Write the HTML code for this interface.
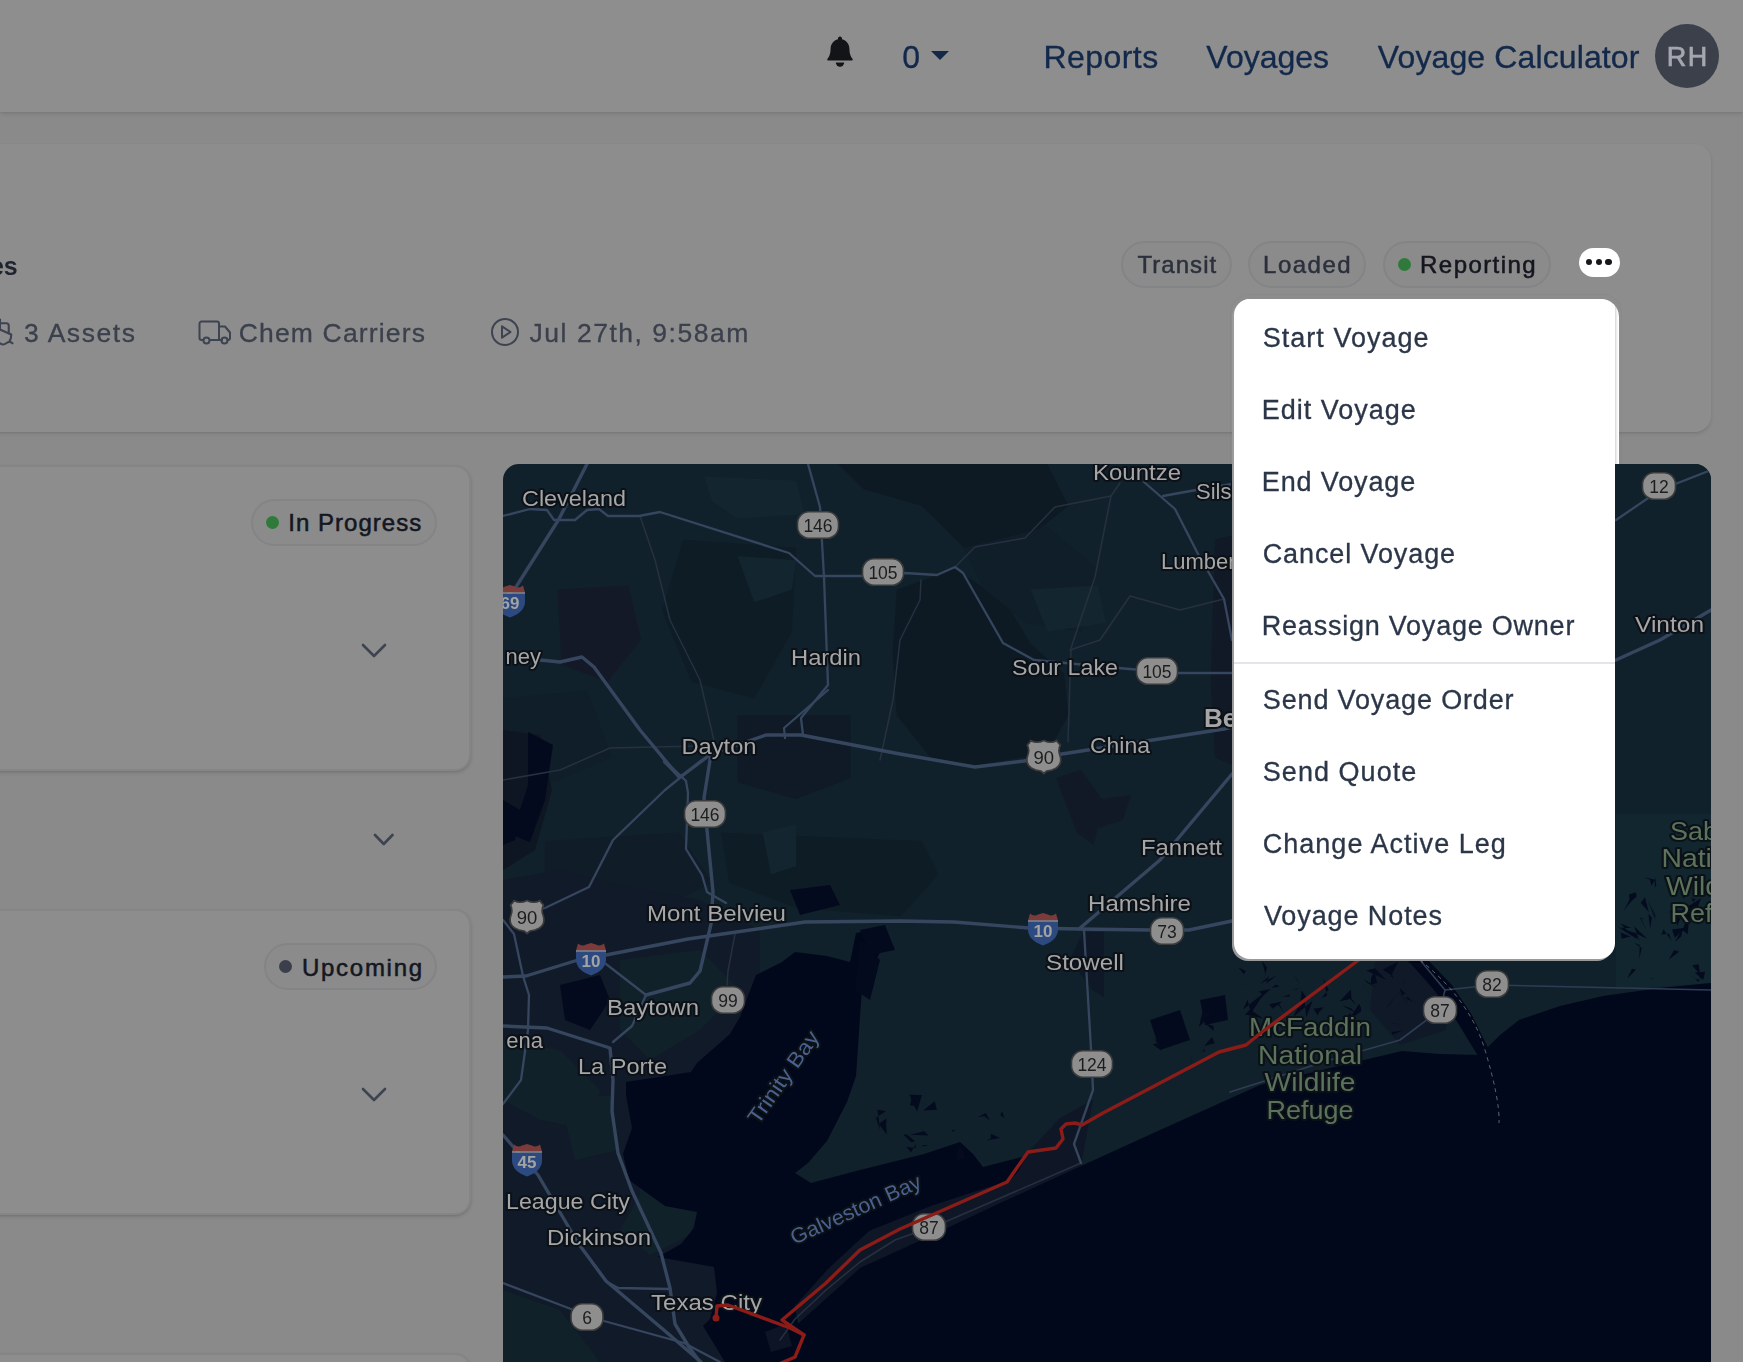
<!DOCTYPE html><html><head><meta charset="utf-8"><style>
*{box-sizing:border-box;margin:0;padding:0}
html,body{width:1743px;height:1362px;overflow:hidden;background:#8a8a8a;font-family:"Liberation Sans",sans-serif;}
.t{position:absolute;white-space:nowrap;}
#w{position:absolute;left:0;top:0;width:1743px;height:1362px;overflow:hidden;will-change:opacity;opacity:.9999}
.abs{position:absolute;}
.card{position:absolute;background:#8d8d8d;border-radius:16px;}
.pill{position:absolute;border-radius:24px;background:#8b8b8c;border:2px solid #838485;}
</style></head><body><div id="w"><div class="abs" style="left:0;top:0;width:1743px;height:112px;background:#8e8e8e;box-shadow:0 2px 5px rgba(0,0,0,.10),0 1px 2px rgba(0,0,0,.06)"></div><svg class="abs" style="left:826px;top:35px" width="28" height="34" viewBox="0 0 28 34"><path d="M14 1.6c-1.1 0-2 .9-2 2v.7C7.6 5.3 4.6 9.200 4.600 13.800c0 5.200-1.500 8.300-3.200 10.300-.5.600-.1 1.500.7 1.500h23.800c.8 0 1.200-.9.7-1.500-1.700-2-3.200-5.100-3.200-10.300 0-4.600-3-8.500-7.400-9.500v-.7c0-1.100-.9-2-2-2z" fill="#131418"/><path d="M9.800 27.600a4.200 4.200 0 0 0 8.400 0z" fill="#131418"/></svg><div class="t" style="left:902.2px;top:38.4px;font-size:32px;line-height:38.4px;letter-spacing:0.00px;color:#13294b;-webkit-text-stroke:.35px #13294b;">0</div><svg class="abs" style="left:931px;top:51px" width="18" height="9" viewBox="0 0 18 9"><path d="M0 0h18l-9 9z" fill="#14294a"/></svg><div class="t" style="left:1043.4px;top:37.9px;font-size:32px;line-height:38.4px;letter-spacing:0.45px;color:#13294b;-webkit-text-stroke:.35px #13294b;">Reports</div><div class="t" style="left:1206.3px;top:37.9px;font-size:32px;line-height:38.4px;letter-spacing:0.01px;color:#13294b;-webkit-text-stroke:.35px #13294b;">Voyages</div><div class="t" style="left:1377.8px;top:37.9px;font-size:32px;line-height:38.4px;letter-spacing:0.12px;color:#13294b;-webkit-text-stroke:.35px #13294b;">Voyage Calculator</div><div class="abs" style="left:1655px;top:24px;width:64px;height:64px;border-radius:50%;background:#3c404b"></div><div class="t" style="left:1666.8px;top:40.8px;font-size:27px;line-height:32.4px;letter-spacing:1.44px;color:#a4a7ad;-webkit-text-stroke:.7px #a4a7ad;">RH</div><div class="card" style="left:-40px;top:144px;width:1751px;height:288px;box-shadow:0 2px 4px rgba(0,0,0,.10),0 1px 2px rgba(0,0,0,.06)"></div><div class="t" style="left:-10.1px;top:251.0px;font-size:25px;line-height:30.0px;letter-spacing:0.00px;color:#1f2430;font-weight:700;">es</div><svg class="abs" style="left:-15px;top:317px" width="30" height="30" viewBox="0 0 24 24" fill="none" stroke="#3d4350" stroke-width="1.7" stroke-linecap="round" stroke-linejoin="round"><path d="M2 21c.6.5 1.200 1 2.500 1 2.500 0 2.500-2 5-2 1.300 0 1.900.5 2.500 1 .6.500 1.200 1 2.500 1 2.500 0 2.500-2 5-2 1.300 0 1.900.5 2.500 1"/><path d="M19.400 20A11.600 11.600 0 0 0 21 14l-9-4-9 4c0 2.900.900 5.800 2.800 7.800"/><path d="M19 13V7a2 2 0 0 0-2-2H7a2 2 0 0 0-2 2v6"/><path d="M12 10V2"/></svg><div class="t" style="left:23.9px;top:317.7px;font-size:26.5px;line-height:31.8px;letter-spacing:1.55px;color:#3b404c;-webkit-text-stroke:.3px #3b404c;">3 Assets</div><svg class="abs" style="left:197px;top:317px" width="36" height="30" viewBox="0 0 36 30" fill="none" stroke="#3d4350" stroke-width="2" stroke-linejoin="round" stroke-linecap="round"><path d="M6 23H4.500a2 2 0 0 1-2-2V6.500a2 2 0 0 1 2-2H20a2 2 0 0 1 2 2V23"/><path d="M13 23h12"/><path d="M22 9.500h6l5 6V21a2 2 0 0 1-2 2h-.5"/><circle cx="9.500" cy="23.500" r="3"/><circle cx="27.500" cy="23.500" r="3"/></svg><div class="t" style="left:238.7px;top:317.7px;font-size:26.5px;line-height:31.8px;letter-spacing:1.17px;color:#3b404c;-webkit-text-stroke:.3px #3b404c;">Chem Carriers</div><svg class="abs" style="left:490px;top:317px" width="30" height="30" viewBox="0 0 30 30" fill="none" stroke="#3d4350" stroke-width="2" stroke-linejoin="round"><circle cx="15" cy="15" r="13"/><path d="M12 9.300l8.500 5.700-8.500 5.700z"/></svg><div class="t" style="left:529.6px;top:317.7px;font-size:26.5px;line-height:31.8px;letter-spacing:1.52px;color:#3b404c;-webkit-text-stroke:.3px #3b404c;">Jul 27th, 9:58am</div><div class="pill" style="left:1121px;top:240.500px;width:110.500px;height:47px"></div><div class="t" style="left:1137.5px;top:251.0px;font-size:24px;line-height:28.8px;letter-spacing:1.04px;color:#2b303c;-webkit-text-stroke:.5px #2b303c;">Transit</div><div class="pill" style="left:1248px;top:240.500px;width:117.500px;height:47px"></div><div class="t" style="left:1263.1px;top:251.0px;font-size:24px;line-height:28.8px;letter-spacing:1.49px;color:#2b303c;-webkit-text-stroke:.5px #2b303c;">Loaded</div><div class="pill" style="left:1382.500px;top:240.500px;width:168px;height:47px"></div><div class="abs" style="left:1397.500px;top:257.500px;width:13px;height:13px;border-radius:50%;background:#2f7a3a"></div><div class="t" style="left:1420.1px;top:251.0px;font-size:24px;line-height:28.8px;letter-spacing:1.43px;color:#14171f;-webkit-text-stroke:.55px #14171f;">Reporting</div><div class="card" style="left:-40px;top:464.500px;width:510.500px;height:306px;box-shadow:0 2px 4px rgba(0,0,0,.12),0 1px 2px rgba(0,0,0,.08);border:2px solid #848586;"></div><div class="pill" style="left:250.500px;top:498.500px;width:186px;height:47px"></div><div class="abs" style="left:265.500px;top:515.500px;width:13px;height:13px;border-radius:50%;background:#2f7a3a"></div><div class="t" style="left:288.3px;top:509.2px;font-size:24px;line-height:28.8px;letter-spacing:1.02px;color:#14171f;-webkit-text-stroke:.55px #14171f;">In Progress</div><svg class="abs" style="left:361px;top:642.5px" width="26" height="15" viewBox="-2 -2 26 15" fill="none" stroke="#3d4350" stroke-width="2.600" stroke-linecap="round" stroke-linejoin="round"><path d="M0 0l11.0 11l11.0 -11"/></svg><svg class="abs" style="left:372.5px;top:833px" width="21.5" height="13" viewBox="-2 -2 21.5 13" fill="none" stroke="#3d4350" stroke-width="2.600" stroke-linecap="round" stroke-linejoin="round"><path d="M0 0l8.75 9l8.75 -9"/></svg><div class="card" style="left:-40px;top:909px;width:510.500px;height:306px;box-shadow:0 2px 4px rgba(0,0,0,.12),0 1px 2px rgba(0,0,0,.08);border:2px solid #848586;"></div><div class="pill" style="left:263.500px;top:942.500px;width:173px;height:47px"></div><div class="abs" style="left:278.500px;top:959.500px;width:13px;height:13px;border-radius:50%;background:#3a3f4b"></div><div class="t" style="left:301.9px;top:953.6px;font-size:24px;line-height:28.8px;letter-spacing:1.74px;color:#14171f;-webkit-text-stroke:.55px #14171f;">Upcoming</div><svg class="abs" style="left:361px;top:1086.5px" width="26" height="15" viewBox="-2 -2 26 15" fill="none" stroke="#3d4350" stroke-width="2.600" stroke-linecap="round" stroke-linejoin="round"><path d="M0 0l11.0 11l11.0 -11"/></svg><div class="card" style="left:-40px;top:1352.500px;width:510.500px;height:306px;box-shadow:0 2px 4px rgba(0,0,0,.12),0 1px 2px rgba(0,0,0,.08);border:2px solid #848586;"></div><svg class="abs" style="left:503px;top:464px;border-radius:16px 16px 0 0" width="1208" height="898" viewBox="503 464 1208 898" font-family="Liberation Sans, sans-serif">
<rect x="503" y="464" width="1208" height="898" fill="#11212b"/>
<path d="M896.7,589.6 L955.3,568.7 L1005.6,602.2 L1030.7,644.1 L1064.2,673.4 L1068.4,715.3 L1047.5,753.0 L976.3,765.5 L930.2,757.2 L896.7,715.3 L892.5,652.5Z" fill="#0d1a24" />
<path d="M838.1,464.0 L1047.5,464.0 L1068.4,505.9 L1026.5,539.4 L963.7,547.8 L921.8,505.9 L863.2,489.1Z" fill="#0d1a24" />
<path d="M683.1,539.4 L796.2,547.8 L792.0,631.5 L754.3,698.5 L691.5,681.8 L662.1,610.6Z" fill="#0e1c26" />
<path d="M737.5,715.3 L850.6,715.3 L850.6,778.1 L796.2,799.1 L737.5,782.3Z" fill="#0f1a26" />
<path d="M720.8,832.6 L921.8,840.9 L938.6,874.4 L900.9,916.3 L796.2,907.9 L729.2,882.8Z" fill="#0e1c26" />
<path d="M557.4,589.6 L628.6,585.5 L641.2,639.9 L607.7,681.8 L561.6,665.0Z" fill="#141927" />
<path d="M1055.8,778.1 L1081.0,769.7 L1101.9,799.1 L1131.2,794.9 L1122.8,820.0 L1097.7,828.4 L1093.5,845.1 L1076.8,832.6Z" fill="#121926" />
<path d="M1215.0,539.4 L1233.0,535.2 L1233.0,765.5 L1215.0,757.2 L1210.8,681.8Z" fill="#111927" />
<path d="M963.7,547.8 L1047.5,526.8 L1097.7,568.7 L1081.0,631.5 L1026.5,623.1 L984.6,589.6Z" fill="#0f1e28" />
<path d="M704.0,476.6 L796.2,480.8 L804.5,514.3 L737.5,518.4 L712.4,501.7Z" fill="#13262f" />
<path d="M737.5,556.1 L796.2,560.3 L792.0,589.6 L754.3,602.2Z" fill="#13262f" />
<path d="M1030.7,589.6 L1097.7,585.5 L1106.1,623.1 L1047.5,631.5Z" fill="#13262f" />
<path d="M762.7,832.6 L796.2,824.2 L796.2,866.1 L771.0,874.4Z" fill="#13262f" />
<path d="M503.0,698.5 L586.8,690.2 L611.9,757.2 L553.3,782.3 L503.0,765.5Z" fill="#0f1e28" />
<path d="M544.9,840.9 L678.9,832.6 L712.4,882.8 L628.6,924.7 L544.9,907.9Z" fill="#101c27" />
<path d="M1620,464 L1711,464 L1711,560 L1650,570 L1620,520Z" fill="#10212b" />
<path d="M1616,814 L1711,814 L1711,983 L1616,990Z" fill="#122630" />
<path d="M503,880 L560,870 L620,885 L700,900 L760,930 L760,980 L740,1040 L700,1080 L640,1090 L640,1200 L700,1210 L720,1260 L740,1300 L800,1362 L503,1362Z" fill="#111a28" />
<path d="M503,1040 L560,1050 L600,1090 L590,1130 L540,1120 L503,1100Z" fill="#10212a" />
<path d="M560,1100 L610,1095 L620,1150 L575,1160Z" fill="#10212a" />
<path d="M640,1195 L700,1205 L690,1235 L650,1255 L620,1230Z" fill="#10212a" />
<path d="M503,1290 L560,1310 L600,1362 L503,1362Z" fill="#10212a" />
<path d="M620,960 L700,950 L740,990 L700,1030 L650,1060 L620,1030Z" fill="#10212a" />
<path d="M1081,1166 L1093,1100 L1060,1118 L1030,1150 L1009,1181 L931,1206 L869,1231 L827,1270 L795,1306 L800,1322 L860,1268 L930,1236 L1000,1203Z" fill="#0f1727" />
<path d="M503,730 L540,735 L552,790 L535,850 L503,870Z" fill="#0d1622" />
<path d="M736,1362 L760,1345 L800,1322 L860,1268 L930,1236 L1000,1203 L1081,1166 L1160,1130 L1260,1085 L1330,1068 L1402,1051 L1440,1054 L1480,1055 L1500,1035 L1519,1020 L1560,1006 L1603,996 L1660,988 L1711,983 L1711,1362Z" fill="#02081c" />
<path d="M756,975 L782,962 L795,952 L827,956 L850,962 L856,933 L872,930 L885,943 L876,960 L866,972 L863,975 L860,1017 L856,1076 L847,1102 L827,1141 L808,1163 L795,1173 L811,1183 L860,1170 L924,1154 L960,1142 L973,1154 L983,1167 L1022,1157 L1028,1154 L1018,1172 L1009,1181 L983,1189 L931,1206 L869,1231 L827,1270 L795,1306 L798,1322 L801,1362 L725,1362 L703,1326 L710,1319 L717,1293 L714,1267 L658,1257 L681,1244 L694,1228 L697,1212 L665,1206 L629,1180 L623,1154 L632,1128 L626,1095 L626,1082 L665,1076 L691,1072 L697,1063 L730,1034 L740,1017Z" fill="#02081c" />
<path d="M1375,962 L1420,958 L1450,985 L1446,1030 L1400,1045 L1370,1010Z" fill="#101928" />
<path d="M1406,958 L1426,958 L1452,985 L1472,1015 L1492,1056 L1478,1056 L1456,1020 L1434,990Z" fill="#02081c" />
<path d="M1083,932 L1104,932 L1104,997 L1092,990 L1070,960Z" fill="#0f1826" />
<path d="M765,1332 L786,1324 L792,1346 L771,1352Z" fill="#0c1425" />
<path d="M528,732 L553,745 L545,800 L530,842 L512,835 L528,785Z" fill="#040a1d" />
<path d="M503,800 L520,810 L515,840 L503,845Z" fill="#040a1d" />
<path d="M560,985 L600,975 L610,1000 L590,1030 L565,1020Z" fill="#040a1d" />
<path d="M790,890 L830,885 L840,905 L800,915Z" fill="#040a1d" />
<path d="M860,930 L885,925 L895,950 L870,955Z" fill="#040a1d" />
<path d="M1150,1020 L1180,1010 L1190,1040 L1160,1050Z" fill="#040a1d" />
<path d="M1200,1000 L1225,995 L1228,1020 L1205,1025Z" fill="#040a1d" />
<path d="M860,940 L880,960 L870,1000 L855,990Z" fill="#040a1d" />
<path d="M921.9,1095.0 L917.0,1111.7 L909.5,1094.8Z" fill="#050b1e" /><path d="M934.7,1101.2 L923.3,1110.6 L937.0,1109.7Z" fill="#050b1e" /><path d="M923.3,1144.9 L921.4,1146.6 L928.9,1145.3Z" fill="#050b1e" /><path d="M952.5,1132.0 L951.4,1130.6 L955.8,1129.6Z" fill="#050b1e" /><path d="M1002.1,1111.3 L1000.3,1115.2 L1004.5,1118.1Z" fill="#050b1e" /><path d="M906.3,1147.0 L915.5,1148.0 L915.8,1143.9 L911.0,1152.3Z" fill="#050b1e" /><path d="M985.8,1113.0 L989.9,1120.6 L984.2,1116.3 L977.7,1116.9Z" fill="#050b1e" /><path d="M965.6,1158.6 L957.1,1159.8 L957.3,1152.2 L960.5,1143.1Z" fill="#050b1e" /><path d="M903.4,1134.8 L911.0,1141.9 L915.5,1141.6 L906.6,1134.2Z" fill="#050b1e" /><path d="M909.7,1134.8 L924.2,1131.3 L928.6,1135.6Z" fill="#050b1e" /><path d="M917.9,1106.5 L909.8,1105.2 L912.7,1094.7 L916.9,1108.2Z" fill="#050b1e" /><path d="M990.7,1138.6 L990.8,1133.8 L1000.3,1137.9 L986.1,1140.5Z" fill="#050b1e" /><path d="M886.4,1118.2 L878.9,1123.9 L886.8,1134.6 L886.2,1125.7Z" fill="#050b1e" /><path d="M885.7,1111.2 L875.9,1117.8 L880.1,1130.3 L877.5,1109.6Z" fill="#050b1e" />
<path d="M1414.4,1002.1 L1412.9,999.6 L1415.4,1004.8Z" fill="#050b1e" /><path d="M1405.3,993.2 L1407.4,995.2 L1399.4,988.1 L1402.1,995.8Z" fill="#050b1e" /><path d="M1282.3,1001.4 L1269.3,1004.2 L1272.6,1008.7Z" fill="#050b1e" /><path d="M1363.0,984.2 L1362.4,983.6 L1373.3,1001.5Z" fill="#050b1e" /><path d="M1398.1,993.2 L1389.0,1005.3 L1385.1,1008.9Z" fill="#050b1e" /><path d="M1317.7,1015.5 L1313.4,1008.8 L1323.7,1007.3 L1319.1,1012.3Z" fill="#050b1e" /><path d="M1361.1,1007.9 L1359.0,1003.7 L1348.6,1020.1 L1361.0,1011.4Z" fill="#050b1e" /><path d="M1396.7,990.7 L1408.1,1003.9 L1403.9,998.6Z" fill="#050b1e" /><path d="M1393.7,976.4 L1390.5,976.7 L1398.4,961.5 L1382.6,969.8Z" fill="#050b1e" /><path d="M1390.6,1022.7 L1401.5,1024.4 L1393.7,1023.6Z" fill="#050b1e" /><path d="M1337.0,1021.2 L1343.2,1023.9 L1340.7,1026.9Z" fill="#050b1e" /><path d="M1408.1,997.3 L1404.9,997.8 L1413.0,1002.2Z" fill="#050b1e" /><path d="M1402.6,1030.5 L1392.4,1034.8 L1391.7,1032.0Z" fill="#050b1e" /><path d="M1263.1,1018.4 L1250.1,1009.6 L1245.0,1014.5Z" fill="#050b1e" /><path d="M1386.2,980.1 L1366.2,970.4 L1374.8,968.2Z" fill="#050b1e" /><path d="M1271.7,988.0 L1279.6,986.4 L1275.6,984.5Z" fill="#050b1e" /><path d="M1424.6,963.7 L1407.1,962.1 L1419.8,967.8Z" fill="#050b1e" /><path d="M1261.0,997.6 L1263.7,996.5 L1259.1,991.2 L1270.7,988.9Z" fill="#050b1e" /><path d="M1404.2,980.9 L1404.8,980.7 L1404.9,984.7Z" fill="#050b1e" /><path d="M1304.1,995.1 L1306.2,1017.4 L1312.7,1000.6 L1293.1,1017.2Z" fill="#050b1e" /><path d="M1353.2,1000.5 L1351.1,998.4 L1349.8,998.4 L1356.3,1005.5Z" fill="#050b1e" /><path d="M1278.1,1004.4 L1278.0,1001.8 L1283.8,1012.3Z" fill="#050b1e" /><path d="M1299.9,984.0 L1297.3,979.8 L1293.3,975.0Z" fill="#050b1e" /><path d="M1261.9,960.6 L1267.0,967.7 L1263.5,980.6 L1265.5,974.5Z" fill="#050b1e" /><path d="M1244.8,985.5 L1254.9,979.6 L1244.5,985.6Z" fill="#050b1e" /><path d="M1291.6,989.5 L1297.3,989.2 L1298.5,987.6 L1298.9,988.2Z" fill="#050b1e" /><path d="M1339.5,1001.3 L1350.9,989.4 L1351.4,998.8Z" fill="#050b1e" /><path d="M1339.8,1027.1 L1350.5,1012.5 L1354.6,1030.8 L1350.1,1027.4Z" fill="#050b1e" /><path d="M1392.2,977.0 L1393.4,978.8 L1389.8,970.5Z" fill="#050b1e" /><path d="M1243.7,974.2 L1238.5,967.4 L1246.1,971.0Z" fill="#050b1e" /><path d="M1289.3,994.4 L1290.1,996.5 L1282.7,996.7Z" fill="#050b1e" /><path d="M1371.1,977.8 L1370.8,984.4 L1377.1,982.9 L1374.4,971.2Z" fill="#050b1e" /><path d="M1269.2,976.0 L1266.2,983.7 L1276.9,975.3 L1260.4,983.8Z" fill="#050b1e" /><path d="M1376.2,987.3 L1364.3,979.2 L1367.1,982.7Z" fill="#050b1e" /><path d="M1250.8,1013.8 L1264.9,992.0 L1243.1,1009.4 L1247.6,999.4Z" fill="#050b1e" /><path d="M1351.5,1008.5 L1354.4,1012.2 L1341.7,1005.2Z" fill="#050b1e" /><path d="M1327.3,997.0 L1322.9,996.3 L1325.9,996.4Z" fill="#050b1e" /><path d="M1317.0,1032.7 L1310.0,1034.1 L1318.2,1036.7Z" fill="#050b1e" /><path d="M1301.8,990.6 L1307.3,999.0 L1299.9,1003.9Z" fill="#050b1e" /><path d="M1327.1,995.6 L1321.5,997.9 L1328.4,989.8 L1323.4,978.6Z" fill="#050b1e" />
<path d="M1687.7,934.2 L1689.1,917.8 L1686.1,920.3 L1682.6,930.3Z" fill="#050b1e" /><path d="M1681.9,919.2 L1676.5,915.9 L1677.1,926.2 L1681.1,916.8Z" fill="#050b1e" /><path d="M1703.8,975.2 L1697.3,980.6 L1699.8,977.4Z" fill="#050b1e" /><path d="M1693.4,902.8 L1691.6,897.8 L1697.2,900.2 L1695.4,898.8Z" fill="#050b1e" /><path d="M1674.8,941.9 L1681.4,936.2 L1682.5,928.7Z" fill="#050b1e" /><path d="M1697.6,981.6 L1694.7,977.9 L1689.0,975.5 L1700.2,980.7Z" fill="#050b1e" /><path d="M1694.7,972.4 L1705.2,971.8 L1703.1,980.0Z" fill="#050b1e" /><path d="M1692.1,965.2 L1698.6,964.2 L1700.2,974.7Z" fill="#050b1e" /><path d="M1672.1,929.4 L1686.4,927.6 L1674.8,937.8Z" fill="#050b1e" /><path d="M1637.0,937.5 L1635.1,933.1 L1618.2,927.2 L1637.0,939.1Z" fill="#050b1e" /><path d="M1643.9,877.3 L1650.1,879.8 L1651.3,885.7 L1655.4,879.7Z" fill="#050b1e" /><path d="M1654.8,887.6 L1656.3,885.4 L1655.1,876.6Z" fill="#050b1e" /><path d="M1693.2,919.5 L1690.0,919.8 L1679.2,911.9 L1701.0,898.2Z" fill="#050b1e" /><path d="M1621.8,938.8 L1630.6,936.5 L1620.6,932.6Z" fill="#050b1e" /><path d="M1629.7,902.4 L1636.8,896.5 L1635.8,892.3 L1629.1,894.6Z" fill="#050b1e" /><path d="M1653.8,978.8 L1652.9,979.2 L1650.3,978.0Z" fill="#050b1e" /><path d="M1639.5,941.0 L1633.8,932.6 L1647.2,938.7 L1634.0,926.2Z" fill="#050b1e" /><path d="M1636.0,969.7 L1627.2,978.5 L1632.0,968.7Z" fill="#050b1e" /><path d="M1689.8,913.0 L1691.0,918.1 L1680.4,916.3Z" fill="#050b1e" /><path d="M1639.3,958.8 L1639.7,945.1 L1634.2,943.0 L1641.7,948.1Z" fill="#050b1e" /><path d="M1684.0,899.0 L1685.8,895.3 L1683.0,890.4 L1683.3,897.2Z" fill="#050b1e" /><path d="M1671.2,940.6 L1663.5,929.2 L1661.4,934.4 L1669.1,933.8Z" fill="#050b1e" /><path d="M1650.1,928.6 L1648.4,914.1 L1651.9,917.6Z" fill="#050b1e" /><path d="M1672.4,910.4 L1668.0,912.5 L1682.6,910.5Z" fill="#050b1e" /><path d="M1632.7,899.6 L1630.1,898.7 L1623.7,910.5Z" fill="#050b1e" /><path d="M1640.6,917.6 L1646.5,930.1 L1640.0,918.0 L1645.1,919.7Z" fill="#050b1e" /><path d="M1668.7,959.5 L1679.3,951.7 L1674.2,950.1Z" fill="#050b1e" /><path d="M1648.7,911.7 L1640.8,903.0 L1644.9,897.2Z" fill="#050b1e" /><path d="M1620.6,927.7 L1628.6,932.0 L1620.5,923.6 L1631.2,928.0Z" fill="#050b1e" /><path d="M1655.6,920.4 L1647.2,898.6 L1656.1,918.4 L1653.0,908.0Z" fill="#050b1e" />
<path d="M1191.1,1063.1 L1190.8,1064.2 L1191.7,1052.0Z" fill="#050b1e" /><path d="M1152.9,1044.5 L1158.6,1042.2 L1154.0,1037.7 L1161.6,1050.7Z" fill="#050b1e" /><path d="M1164.2,1047.3 L1158.3,1049.1 L1164.5,1042.1Z" fill="#050b1e" /><path d="M1213.9,1031.1 L1213.5,1025.9 L1204.4,1022.9Z" fill="#050b1e" /><path d="M1202.3,1012.2 L1198.9,1027.3 L1215.2,1010.2Z" fill="#050b1e" /><path d="M1200.9,1051.4 L1205.5,1051.6 L1202.9,1049.5 L1205.9,1049.5Z" fill="#050b1e" /><path d="M1204.3,1046.1 L1212.1,1037.0 L1214.7,1043.3Z" fill="#050b1e" /><path d="M1220.8,1051.3 L1220.2,1051.5 L1227.1,1044.9Z" fill="#050b1e" />
<path d="M1111,496 L1095,577 L1071,648 L1068,742" fill="none" stroke="#273041" stroke-width="1.5" stroke-linejoin="round" stroke-linecap="round" />
<path d="M1120,483 L1111,496 L1055,507 L1025,538 L975,547 L955,567" fill="none" stroke="#273041" stroke-width="1.5" stroke-linejoin="round" stroke-linecap="round" />
<path d="M640,516 L655,560 L670,620 L700,680 L715,745" fill="none" stroke="#273041" stroke-width="1.5" stroke-linejoin="round" stroke-linecap="round" />
<path d="M921,580 L920,600 L900,640 L893,700 L880,760" fill="none" stroke="#273041" stroke-width="1.5" stroke-linejoin="round" stroke-linecap="round" />
<path d="M1224,599 L1180,610 L1130,596 L1100,640 L1070,650" fill="none" stroke="#273041" stroke-width="1.5" stroke-linejoin="round" stroke-linecap="round" />
<path d="M503,780 L560,770 L610,748 L700,746" fill="none" stroke="#273041" stroke-width="1.5" stroke-linejoin="round" stroke-linecap="round" />
<path d="M1081,1163 L945,1222 L895,1240 L860,1262 L826,1290 L795,1319 L780,1340" fill="none" stroke="#273041" stroke-width="1.5" stroke-linejoin="round" stroke-linecap="round" />
<path d="M735,934 L728,971 L727,985" fill="none" stroke="#273041" stroke-width="1.5" stroke-linejoin="round" stroke-linecap="round" />
<path d="M1420,960 L1445,990 L1492,985 L1711,990" fill="none" stroke="#2f3d54" stroke-width="1.6" stroke-linejoin="round" stroke-linecap="round" />
<path d="M1445,990 L1440,1010 L1400,1040 L1330,1060 L1230,1092" fill="none" stroke="#2f3d54" stroke-width="1.6" stroke-linejoin="round" stroke-linecap="round" />
<path d="M1420,960 Q1470,1000 1485,1050 T1499,1123" fill="none" stroke="#8a8a8a" stroke-width="1" stroke-dasharray="4 4" opacity=".7"/>
<path d="M587,464 L559,519 L516,587 L503,600" fill="none" stroke="#36465f" stroke-width="3.4" stroke-linejoin="round" stroke-linecap="round" />
<path d="M503,516 L530,509 L547,510 L554,520 L575,520 L587,510 L599,509 L608,516 L639,516 L660,512 L789,553 L815,576 L864,576 L905,573 L937,575 L955,567 L963,573 L1003,643 L1034,660 L1118,668 L1177,673 L1232,673" fill="none" stroke="#36465f" stroke-width="2.3" stroke-linejoin="round" stroke-linecap="round" />
<path d="M808,464 L820,507 L824,577 L828,685 L801,718 L803,735" fill="none" stroke="#36465f" stroke-width="2.3" stroke-linejoin="round" stroke-linecap="round" />
<path d="M828,690 L784,728 L785,738" fill="none" stroke="#36465f" stroke-width="2.3" stroke-linejoin="round" stroke-linecap="round" />
<path d="M540,660 L560,662 L582,657 L594,667 L640,730 L679,777 L683,775 L711,754 L766,735 L801,735 L900,754 L975,767 L1024,761 L1062,754 L1224,729 L1232,727" fill="none" stroke="#36465f" stroke-width="3.4" stroke-linejoin="round" stroke-linecap="round" />
<path d="M711,754 L704,798 L707,830 L713,892 L711,924 L700,971 L690,983 L646,995" fill="none" stroke="#36465f" stroke-width="3.4" stroke-linejoin="round" stroke-linecap="round" />
<path d="M679,777 L664,762" fill="none" stroke="#36465f" stroke-width="2.3" stroke-linejoin="round" stroke-linecap="round" />
<path d="M664,760 L686,781 L688,793 L686,849 L702,875 L707,892 L726,903" fill="none" stroke="#36465f" stroke-width="2.3" stroke-linejoin="round" stroke-linecap="round" />
<path d="M702,760 L665,790 L613,840 L589,887 L545,908 L520,915" fill="none" stroke="#36465f" stroke-width="2.3" stroke-linejoin="round" stroke-linecap="round" />
<path d="M503,977 L526,976 L578,960 L606,955 L688,939 L805,922 L900,921 L954,922 L1029,928 L1079,929 L1151,930 L1189,930 L1232,921" fill="none" stroke="#36465f" stroke-width="3.4" stroke-linejoin="round" stroke-linecap="round" />
<path d="M1079,929 L1160,860 L1232,774" fill="none" stroke="#36465f" stroke-width="3.4" stroke-linejoin="round" stroke-linecap="round" />
<path d="M503,920 L514,934 L523,976 L529,995 L528,1030 L521,1080 L503,1104" fill="none" stroke="#36465f" stroke-width="2.3" stroke-linejoin="round" stroke-linecap="round" />
<path d="M503,1026 L547,1028 L610,1048 L613,1080 L612,1111 L618,1153 L632,1191 L661,1253 L670,1288 L675,1324 L689,1347 L700,1362" fill="none" stroke="#36465f" stroke-width="3.4" stroke-linejoin="round" stroke-linecap="round" />
<path d="M606,964 L646,995 L632,1026 L613,1042" fill="none" stroke="#36465f" stroke-width="2.3" stroke-linejoin="round" stroke-linecap="round" />
<path d="M503,1135 L538,1175 L578,1243 L606,1281 L665,1331 L701,1362" fill="none" stroke="#36465f" stroke-width="3.4" stroke-linejoin="round" stroke-linecap="round" />
<path d="M609,1283 L618,1288 L670,1289" fill="none" stroke="#36465f" stroke-width="2.3" stroke-linejoin="round" stroke-linecap="round" />
<path d="M503,1283 L571,1309 L604,1321 L684,1343 L720,1362" fill="none" stroke="#36465f" stroke-width="2.3" stroke-linejoin="round" stroke-linecap="round" />
<path d="M1144,482 L1175,509 L1198,554 L1224,599 L1232,640" fill="none" stroke="#36465f" stroke-width="2.3" stroke-linejoin="round" stroke-linecap="round" />
<path d="M1163,496 L1196,490 L1232,484" fill="none" stroke="#36465f" stroke-width="2.3" stroke-linejoin="round" stroke-linecap="round" />
<path d="M1616,520 L1660,490 L1711,470" fill="none" stroke="#36465f" stroke-width="2.3" stroke-linejoin="round" stroke-linecap="round" />
<path d="M1616,660 L1660,640 L1711,610" fill="none" stroke="#36465f" stroke-width="3.4" stroke-linejoin="round" stroke-linecap="round" />
<path d="M1084,930 L1091,1049 L1093,1090 L1074,1144 L1081,1163" fill="none" stroke="#36465f" stroke-width="2.3" stroke-linejoin="round" stroke-linecap="round" />
<text x="574" y="498" font-size="22" text-anchor="middle" fill="#a6a6a6" stroke="#0b1117" stroke-width="4" stroke-linejoin="round" paint-order="stroke" dominant-baseline="central" letter-spacing="0" textLength="104" lengthAdjust="spacingAndGlyphs">Cleveland</text>
<text x="1137" y="472" font-size="22" text-anchor="middle" fill="#a6a6a6" stroke="#0b1117" stroke-width="4" stroke-linejoin="round" paint-order="stroke" dominant-baseline="central" letter-spacing="0" textLength="88" lengthAdjust="spacingAndGlyphs">Kountze</text>
<text x="826" y="657" font-size="22" text-anchor="middle" fill="#a6a6a6" stroke="#0b1117" stroke-width="4" stroke-linejoin="round" paint-order="stroke" dominant-baseline="central" letter-spacing="0" textLength="70" lengthAdjust="spacingAndGlyphs">Hardin</text>
<text x="1065" y="667" font-size="22" text-anchor="middle" fill="#a6a6a6" stroke="#0b1117" stroke-width="4" stroke-linejoin="round" paint-order="stroke" dominant-baseline="central" letter-spacing="0" textLength="106" lengthAdjust="spacingAndGlyphs">Sour Lake</text>
<text x="719" y="746" font-size="22" text-anchor="middle" fill="#a6a6a6" stroke="#0b1117" stroke-width="4" stroke-linejoin="round" paint-order="stroke" dominant-baseline="central" letter-spacing="0" textLength="75" lengthAdjust="spacingAndGlyphs">Dayton</text>
<text x="1120" y="745" font-size="22" text-anchor="middle" fill="#a6a6a6" stroke="#0b1117" stroke-width="4" stroke-linejoin="round" paint-order="stroke" dominant-baseline="central" letter-spacing="0" textLength="60" lengthAdjust="spacingAndGlyphs">China</text>
<text x="1181.5" y="847" font-size="22" text-anchor="middle" fill="#a6a6a6" stroke="#0b1117" stroke-width="4" stroke-linejoin="round" paint-order="stroke" dominant-baseline="central" letter-spacing="0" textLength="81" lengthAdjust="spacingAndGlyphs">Fannett</text>
<text x="1139.5" y="903" font-size="22" text-anchor="middle" fill="#a6a6a6" stroke="#0b1117" stroke-width="4" stroke-linejoin="round" paint-order="stroke" dominant-baseline="central" letter-spacing="0" textLength="103" lengthAdjust="spacingAndGlyphs">Hamshire</text>
<text x="1085" y="962" font-size="22" text-anchor="middle" fill="#a6a6a6" stroke="#0b1117" stroke-width="4" stroke-linejoin="round" paint-order="stroke" dominant-baseline="central" letter-spacing="0" textLength="78" lengthAdjust="spacingAndGlyphs">Stowell</text>
<text x="716.5" y="913" font-size="22" text-anchor="middle" fill="#a6a6a6" stroke="#0b1117" stroke-width="4" stroke-linejoin="round" paint-order="stroke" dominant-baseline="central" letter-spacing="0" textLength="139" lengthAdjust="spacingAndGlyphs">Mont Belvieu</text>
<text x="653" y="1007" font-size="22" text-anchor="middle" fill="#a6a6a6" stroke="#0b1117" stroke-width="4" stroke-linejoin="round" paint-order="stroke" dominant-baseline="central" letter-spacing="0" textLength="92" lengthAdjust="spacingAndGlyphs">Baytown</text>
<text x="622.5" y="1066" font-size="22" text-anchor="middle" fill="#a6a6a6" stroke="#0b1117" stroke-width="4" stroke-linejoin="round" paint-order="stroke" dominant-baseline="central" letter-spacing="0" textLength="89" lengthAdjust="spacingAndGlyphs">La Porte</text>
<text x="568" y="1201" font-size="22" text-anchor="middle" fill="#a6a6a6" stroke="#0b1117" stroke-width="4" stroke-linejoin="round" paint-order="stroke" dominant-baseline="central" letter-spacing="0" textLength="124" lengthAdjust="spacingAndGlyphs">League City</text>
<text x="599" y="1237" font-size="22" text-anchor="middle" fill="#a6a6a6" stroke="#0b1117" stroke-width="4" stroke-linejoin="round" paint-order="stroke" dominant-baseline="central" letter-spacing="0" textLength="104" lengthAdjust="spacingAndGlyphs">Dickinson</text>
<text x="706.5" y="1302" font-size="22" text-anchor="middle" fill="#a6a6a6" stroke="#0b1117" stroke-width="4" stroke-linejoin="round" paint-order="stroke" dominant-baseline="central" letter-spacing="0" textLength="111" lengthAdjust="spacingAndGlyphs">Texas City</text>
<text x="1669.5" y="624" font-size="22" text-anchor="middle" fill="#a6a6a6" stroke="#0b1117" stroke-width="4" stroke-linejoin="round" paint-order="stroke" dominant-baseline="central" letter-spacing="0" textLength="69" lengthAdjust="spacingAndGlyphs">Vinton</text>
<text x="1196" y="491" font-size="22" text-anchor="start" fill="#a6a6a6" stroke="#0b1117" stroke-width="4" stroke-linejoin="round" paint-order="stroke" dominant-baseline="central" letter-spacing="0">Silsbee</text>
<text x="1161" y="561" font-size="22" text-anchor="start" fill="#a6a6a6" stroke="#0b1117" stroke-width="4" stroke-linejoin="round" paint-order="stroke" dominant-baseline="central" letter-spacing="0">Lumberton</text>
<text x="1204" y="718" font-size="26" text-anchor="start" fill="#a6a6a6" stroke="#0b1117" stroke-width="4" stroke-linejoin="round" paint-order="stroke" dominant-baseline="central" letter-spacing="0" font-weight="700">Beaumont</text>
<text x="541" y="656" font-size="22" text-anchor="end" fill="#a6a6a6" stroke="#0b1117" stroke-width="4" stroke-linejoin="round" paint-order="stroke" dominant-baseline="central" letter-spacing="0">ney</text>
<text x="543" y="1040" font-size="22" text-anchor="end" fill="#a6a6a6" stroke="#0b1117" stroke-width="4" stroke-linejoin="round" paint-order="stroke" dominant-baseline="central" letter-spacing="0">ena</text>
<text x="783" y="1077" font-size="21" text-anchor="middle" fill="#4a6190" stroke="#0b1117" stroke-width="4" stroke-linejoin="round" paint-order="stroke" dominant-baseline="central" letter-spacing="0" transform="rotate(-55 783 1077)" textLength="108" lengthAdjust="spacingAndGlyphs">Trinity Bay</text>
<text x="855.5" y="1209" font-size="21" text-anchor="middle" fill="#4a6190" stroke="#0b1117" stroke-width="4" stroke-linejoin="round" paint-order="stroke" dominant-baseline="central" letter-spacing="0" transform="rotate(-24.2 855.5 1209)" textLength="141" lengthAdjust="spacingAndGlyphs">Galveston Bay</text>
<text x="1310" y="1027.0" font-size="25" text-anchor="middle" fill="#5b725b" stroke="#0b1117" stroke-width="4" stroke-linejoin="round" paint-order="stroke" dominant-baseline="central" letter-spacing="0" textLength="122" lengthAdjust="spacingAndGlyphs">McFaddin</text>
<text x="1310" y="1054.7" font-size="25" text-anchor="middle" fill="#5b725b" stroke="#0b1117" stroke-width="4" stroke-linejoin="round" paint-order="stroke" dominant-baseline="central" letter-spacing="0" textLength="104" lengthAdjust="spacingAndGlyphs">National</text>
<text x="1310" y="1082.4" font-size="25" text-anchor="middle" fill="#5b725b" stroke="#0b1117" stroke-width="4" stroke-linejoin="round" paint-order="stroke" dominant-baseline="central" letter-spacing="0" textLength="91" lengthAdjust="spacingAndGlyphs">Wildlife</text>
<text x="1310" y="1110.1" font-size="25" text-anchor="middle" fill="#5b725b" stroke="#0b1117" stroke-width="4" stroke-linejoin="round" paint-order="stroke" dominant-baseline="central" letter-spacing="0" textLength="87" lengthAdjust="spacingAndGlyphs">Refuge</text>
<text x="1670" y="830.5" font-size="25" text-anchor="start" fill="#5b725b" stroke="#0b1117" stroke-width="4" stroke-linejoin="round" paint-order="stroke" dominant-baseline="central" letter-spacing="0" textLength="84" lengthAdjust="spacingAndGlyphs">Sabine</text>
<text x="1661.5" y="858.1" font-size="25" text-anchor="start" fill="#5b725b" stroke="#0b1117" stroke-width="4" stroke-linejoin="round" paint-order="stroke" dominant-baseline="central" letter-spacing="0" textLength="104" lengthAdjust="spacingAndGlyphs">National</text>
<text x="1666" y="885.7" font-size="25" text-anchor="start" fill="#5b725b" stroke="#0b1117" stroke-width="4" stroke-linejoin="round" paint-order="stroke" dominant-baseline="central" letter-spacing="0" textLength="91" lengthAdjust="spacingAndGlyphs">Wildlife</text>
<text x="1670.5" y="913.3" font-size="25" text-anchor="start" fill="#5b725b" stroke="#0b1117" stroke-width="4" stroke-linejoin="round" paint-order="stroke" dominant-baseline="central" letter-spacing="0" textLength="87" lengthAdjust="spacingAndGlyphs">Refuge</text>
<rect x="797.5" y="511.75" width="41" height="26.5" rx="11.5" fill="#8e8e8e" stroke="#3b3b3b" stroke-width="1.6"/><text x="818" y="525.5" font-size="17.5" text-anchor="middle" dominant-baseline="central" fill="#1d1d1d">146</text>
<rect x="862.5" y="558.75" width="41" height="26.5" rx="11.5" fill="#8e8e8e" stroke="#3b3b3b" stroke-width="1.6"/><text x="883" y="572.5" font-size="17.5" text-anchor="middle" dominant-baseline="central" fill="#1d1d1d">105</text>
<rect x="1136.5" y="657.75" width="41" height="26.5" rx="11.5" fill="#8e8e8e" stroke="#3b3b3b" stroke-width="1.6"/><text x="1157" y="671.5" font-size="17.5" text-anchor="middle" dominant-baseline="central" fill="#1d1d1d">105</text>
<rect x="684.5" y="800.75" width="41" height="26.5" rx="11.5" fill="#8e8e8e" stroke="#3b3b3b" stroke-width="1.6"/><text x="705" y="814.5" font-size="17.5" text-anchor="middle" dominant-baseline="central" fill="#1d1d1d">146</text>
<rect x="711.5" y="986.75" width="33" height="26.5" rx="11.5" fill="#8e8e8e" stroke="#3b3b3b" stroke-width="1.6"/><text x="728" y="1000.5" font-size="17.5" text-anchor="middle" dominant-baseline="central" fill="#1d1d1d">99</text>
<rect x="1150.5" y="917.75" width="33" height="26.5" rx="11.5" fill="#8e8e8e" stroke="#3b3b3b" stroke-width="1.6"/><text x="1167" y="931.5" font-size="17.5" text-anchor="middle" dominant-baseline="central" fill="#1d1d1d">73</text>
<rect x="1071.5" y="1050.75" width="41" height="26.5" rx="11.5" fill="#8e8e8e" stroke="#3b3b3b" stroke-width="1.6"/><text x="1092" y="1064.5" font-size="17.5" text-anchor="middle" dominant-baseline="central" fill="#1d1d1d">124</text>
<rect x="912.5" y="1213.75" width="33" height="26.5" rx="11.5" fill="#8e8e8e" stroke="#3b3b3b" stroke-width="1.6"/><text x="929" y="1227.5" font-size="17.5" text-anchor="middle" dominant-baseline="central" fill="#1d1d1d">87</text>
<rect x="1423.5" y="996.75" width="33" height="26.5" rx="11.5" fill="#8e8e8e" stroke="#3b3b3b" stroke-width="1.6"/><text x="1440" y="1010.5" font-size="17.5" text-anchor="middle" dominant-baseline="central" fill="#1d1d1d">87</text>
<rect x="1475.5" y="970.75" width="33" height="26.5" rx="11.5" fill="#8e8e8e" stroke="#3b3b3b" stroke-width="1.6"/><text x="1492" y="984.5" font-size="17.5" text-anchor="middle" dominant-baseline="central" fill="#1d1d1d">82</text>
<rect x="1642.5" y="472.75" width="33" height="26.5" rx="11.5" fill="#8e8e8e" stroke="#3b3b3b" stroke-width="1.6"/><text x="1659" y="486.5" font-size="17.5" text-anchor="middle" dominant-baseline="central" fill="#1d1d1d">12</text>
<rect x="571.0" y="1303.75" width="32" height="26.5" rx="11.5" fill="#8e8e8e" stroke="#3b3b3b" stroke-width="1.6"/><text x="587" y="1317.5" font-size="17.5" text-anchor="middle" dominant-baseline="central" fill="#1d1d1d">6</text>
<path d="M1027.3,745.0 q2.500,-2 3.500,-4.500 q6,3.500 13,0 q7,3.500 13,0 q1,2.500 3.500,4.500 q-2.500,5 -0.500,10 q3,8.500 -3.500,13 q-4,2.500 -9.500,3 l-3,2.500 l-3,-2.500 q-5.500,-0.500 -9.500,-3 q-6.500,-4.500 -3.500,-13 q2,-5 -0.500,-10z" fill="#8e8e8e" stroke="#3b3b3b" stroke-width="1.7" stroke-linejoin="round"/><text x="1043.8" y="757.5" font-size="18.5" text-anchor="middle" dominant-baseline="central" fill="#1d1d1d">90</text>
<path d="M510.5,905.0 q2.500,-2 3.500,-4.500 q6,3.500 13,0 q7,3.500 13,0 q1,2.500 3.500,4.500 q-2.500,5 -0.500,10 q3,8.500 -3.500,13 q-4,2.500 -9.500,3 l-3,2.500 l-3,-2.500 q-5.500,-0.500 -9.500,-3 q-6.500,-4.500 -3.500,-13 q2,-5 -0.500,-10z" fill="#8e8e8e" stroke="#3b3b3b" stroke-width="1.7" stroke-linejoin="round"/><text x="527" y="917.5" font-size="18.5" text-anchor="middle" dominant-baseline="central" fill="#1d1d1d">90</text>
<path d="M495,593.5 h30 v8 q0,10.500 -15,16 q-15,-5.500 -15,-16z" fill="#2d4a80"/><path d="M495,592.5 l2,-7 q4,3.500 8,1 l5,-1.500 l5,1.500 q4,2.500 8,-1 l2,7z" fill="#7a3b3a"/><path d="M495,593 h30" stroke="#9a9da5" stroke-width="1.3"/><text x="510" y="603.5" font-size="17" font-weight="700" text-anchor="middle" dominant-baseline="central" fill="#a3a3a3">69</text>
<path d="M576,951.5 h30 v8 q0,10.500 -15,16 q-15,-5.500 -15,-16z" fill="#2d4a80"/><path d="M576,950.5 l2,-7 q4,3.500 8,1 l5,-1.500 l5,1.500 q4,2.500 8,-1 l2,7z" fill="#7a3b3a"/><path d="M576,951 h30" stroke="#9a9da5" stroke-width="1.3"/><text x="591" y="961.5" font-size="17" font-weight="700" text-anchor="middle" dominant-baseline="central" fill="#a3a3a3">10</text>
<path d="M1028,921.5 h30 v8 q0,10.500 -15,16 q-15,-5.500 -15,-16z" fill="#2d4a80"/><path d="M1028,920.5 l2,-7 q4,3.500 8,1 l5,-1.500 l5,1.500 q4,2.500 8,-1 l2,7z" fill="#7a3b3a"/><path d="M1028,921 h30" stroke="#9a9da5" stroke-width="1.3"/><text x="1043" y="931.5" font-size="17" font-weight="700" text-anchor="middle" dominant-baseline="central" fill="#a3a3a3">10</text>
<path d="M512,1152.5 h30 v8 q0,10.500 -15,16 q-15,-5.500 -15,-16z" fill="#2d4a80"/><path d="M512,1151.5 l2,-7 q4,3.500 8,1 l5,-1.500 l5,1.500 q4,2.500 8,-1 l2,7z" fill="#7a3b3a"/><path d="M512,1152 h30" stroke="#9a9da5" stroke-width="1.3"/><text x="527" y="1162.5" font-size="17" font-weight="700" text-anchor="middle" dominant-baseline="central" fill="#a3a3a3">45</text>
<path d="M716,1318 L717,1306 L728,1305 L790,1328 L804,1335" fill="none" stroke="#8c1c18" stroke-width="3.4" stroke-linejoin="round" stroke-linecap="round" />
<path d="M779,1364 L795,1357 L804,1335 L782,1320 L826,1283 L860,1250 L900,1229 L1007,1182 L1028,1152 L1056,1148 L1063,1139 L1061,1129 L1066,1124 L1075,1123 L1082,1125 L1103,1113 L1219,1052 L1246,1045 L1262,1032 L1360,959" fill="none" stroke="#8c1c18" stroke-width="3.4" stroke-linejoin="round" stroke-linecap="round" />
<circle cx="716" cy="1318" r="3.5" fill="#8c1c18"/>
</svg><div class="abs" style="left:1230px;top:293.500px;width:392px;height:170px;border-radius:19px 19px 0 0;border:1.5px solid rgba(0,0,0,.028);border-bottom:none"></div><div class="abs" style="left:1234px;top:299px;width:385px;height:164.500px;border-radius:16px 18px 0 0;background:linear-gradient(90deg,#fff 0,#fff 380.500px,#dedede 381.500px,#ececec 382.500px,#fff 384px)"></div><div class="abs" style="left:1234px;top:299px;width:381px;height:659.500px;border-radius:16px;background:#fff;box-shadow:-2px 2px 0 0 #9a9a9a"></div><div class="abs" style="left:1234px;top:661.500px;width:381px;height:2px;background:#e3e5ee"></div><div class="t" style="left:1262.8px;top:322.1px;font-size:27px;line-height:32.4px;letter-spacing:1.01px;color:#2b3648;-webkit-text-stroke:.3px #2b3648;">Start Voyage</div><div class="t" style="left:1261.8px;top:394.1px;font-size:27px;line-height:32.4px;letter-spacing:0.99px;color:#2b3648;-webkit-text-stroke:.3px #2b3648;">Edit Voyage</div><div class="t" style="left:1261.8px;top:466.1px;font-size:27px;line-height:32.4px;letter-spacing:0.86px;color:#2b3648;-webkit-text-stroke:.3px #2b3648;">End Voyage</div><div class="t" style="left:1262.7px;top:538.1px;font-size:27px;line-height:32.4px;letter-spacing:0.90px;color:#2b3648;-webkit-text-stroke:.3px #2b3648;">Cancel Voyage</div><div class="t" style="left:1261.8px;top:610.1px;font-size:27px;line-height:32.4px;letter-spacing:0.77px;color:#2b3648;-webkit-text-stroke:.3px #2b3648;">Reassign Voyage Owner</div><div class="t" style="left:1262.8px;top:684.0px;font-size:27px;line-height:32.4px;letter-spacing:0.85px;color:#2b3648;-webkit-text-stroke:.3px #2b3648;">Send Voyage Order</div><div class="t" style="left:1262.8px;top:756.0px;font-size:27px;line-height:32.4px;letter-spacing:1.04px;color:#2b3648;-webkit-text-stroke:.3px #2b3648;">Send Quote</div><div class="t" style="left:1262.7px;top:828.0px;font-size:27px;line-height:32.4px;letter-spacing:1.03px;color:#2b3648;-webkit-text-stroke:.3px #2b3648;">Change Active Leg</div><div class="t" style="left:1263.9px;top:900.0px;font-size:27px;line-height:32.4px;letter-spacing:0.91px;color:#2b3648;-webkit-text-stroke:.3px #2b3648;">Voyage Notes</div><div class="abs" style="left:1579px;top:248px;width:40.500px;height:29px;border-radius:14.500px;background:#fff"></div><div class="abs" style="left:1585.6px;top:259.1px;width:6.400px;height:6.400px;border-radius:50%;background:#16181d"></div><div class="abs" style="left:1595.5px;top:259.1px;width:6.400px;height:6.400px;border-radius:50%;background:#16181d"></div><div class="abs" style="left:1605.3999999999999px;top:259.1px;width:6.400px;height:6.400px;border-radius:50%;background:#16181d"></div></div></body></html>
